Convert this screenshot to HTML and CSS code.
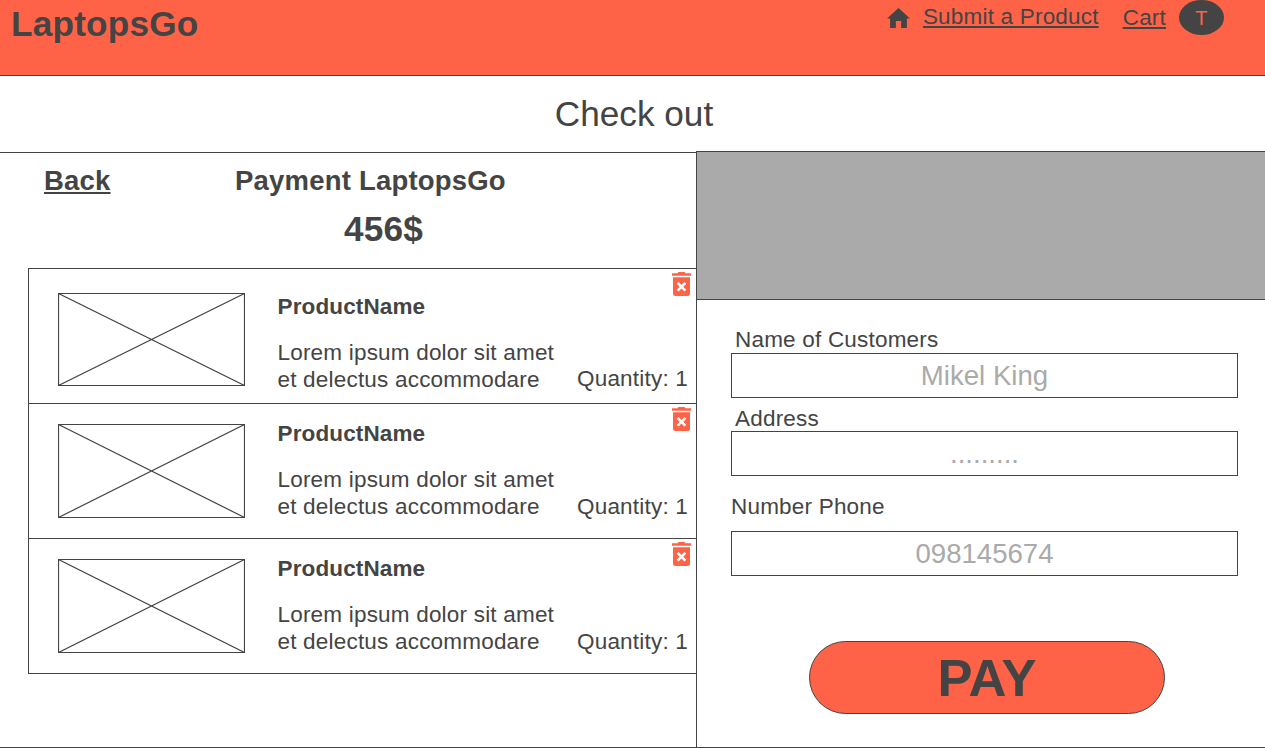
FILE: index.html
```html
<!DOCTYPE html>
<html lang="en">
<head>
<meta charset="utf-8">
<title>LaptopsGo - Check out</title>
<link rel="stylesheet" href="styles.css">
</head>
<body>
<svg class="defs" width="0" height="0">
  <symbol id="trash" viewBox="0 0 19 24">
    <path fill="#ff6347" d="M0 1.200h5.500Q6 0 7 0h5Q13 0 13.500 1.200H19v2.600H0zM1 5.200h17V21.500a2.500 2.500 0 0 1-2.500 2.500h-12A2.500 2.500 0 0 1 1 21.500z"/>
    <path stroke="#fff" stroke-width="2.600" d="M5.600 10.900l7.800 7.800M13.400 10.900l-7.800 7.800"/>
  </symbol>
</svg>
<header class="header">
  <h1 class="logo">LaptopsGo</h1>
  <nav class="nav">
    <svg class="home" viewBox="2 3 20 17" preserveAspectRatio="none"><path fill="#444" d="M9.700 20v-5.900h4.600V20h5v-8H22L12 3 2 12h2.700v8z"/></svg>
    <a class="submit">Submit a Product</a>
    <a class="cart">Cart</a>
    <span class="avatar">T</span>
  </nav>
</header>
<h2 class="title">Check out</h2>
<main class="main">
  <section class="order">
    <div class="order-head">
      <a class="back">Back</a>
      <div class="payee">Payment LaptopsGo</div>
    </div>
    <div class="total">456$</div>
    <div class="list">
      <article class="item first">
        <svg class="thumb" viewBox="0 0 187 93" preserveAspectRatio="none"><path d="M.5.5h186v92H.5zM.5.5l186 92M186.500.5l-186 92"/></svg>
        <div class="info"><h3 class="name">ProductName</h3><p class="desc">Lorem ipsum dolor sit amet<br>et delectus accommodare</p></div>
        <div class="side"><svg class="trash"><use href="#trash"/></svg><span class="qty">Quantity: 1</span></div>
      </article>
      <article class="item">
        <svg class="thumb" viewBox="0 0 187 94" preserveAspectRatio="none"><path d="M.5.5h186v93H.5zM.5.5l186 93M186.500.5l-186 93"/></svg>
        <div class="info"><h3 class="name">ProductName</h3><p class="desc">Lorem ipsum dolor sit amet<br>et delectus accommodare</p></div>
        <div class="side"><svg class="trash"><use href="#trash"/></svg><span class="qty">Quantity: 1</span></div>
      </article>
      <article class="item">
        <svg class="thumb" viewBox="0 0 187 94" preserveAspectRatio="none"><path d="M.5.5h186v93H.5zM.5.5l186 93M186.500.5l-186 93"/></svg>
        <div class="info"><h3 class="name">ProductName</h3><p class="desc">Lorem ipsum dolor sit amet<br>et delectus accommodare</p></div>
        <div class="side"><svg class="trash"><use href="#trash"/></svg><span class="qty">Quantity: 1</span></div>
      </article>
    </div>
  </section>
  <section class="customer">
    <div class="banner"></div>
    <form class="form">
      <div class="label">Name of Customers</div>
      <div class="field">Mikel King</div>
      <div class="label address">Address</div>
      <div class="field">.........</div>
      <div class="label phone">Number Phone</div>
      <div class="field">098145674</div>
      <button class="pay" type="button">PAY</button>
    </form>
  </section>
</main>
</body>
</html>
```
FILE: styles.css
```css
* { box-sizing: border-box; }
body {
  margin: 0;
  height: 748px;
  display: flex;
  flex-direction: column;
  overflow: hidden;
  background: #fff;
  color: #444;
  font: 22.500px/26px "Liberation Sans", Arial, sans-serif;
  letter-spacing: .2px;
}
h1, h2, h3, p { margin: 0; }
svg { display: block; flex: none; }
.defs { position: absolute; }

.header {
  height: 76px;
  display: flex;
  justify-content: space-between;
  align-items: flex-start;
  background: #ff6347;
  border-bottom: 1px solid #444;
  padding: 0 41px 0 11px;
}
.logo { font-size: 35.200px; line-height: 40px; margin-top: 4px; }
.nav { display: flex; align-items: flex-start; }
.home { width: 23px; height: 20px; margin: 8px 13px 0 0; }
.submit, .cart, .back { text-decoration: underline; }
.submit { margin: 4px 24px 0 0; }
.cart { margin: 5px 13px 0 0; }
.avatar {
  width: 45px;
  height: 35px;
  border-radius: 50%;
  background: #444;
  color: #ff6347;
  font-size: 20px;
  line-height: 36px;
  text-align: center;
}

.title {
  height: 77px;
  padding: 18px 0 0 3px;
  border-bottom: 1px solid #444;
  font-size: 35.200px;
  line-height: 40px;
  font-weight: 400;
  letter-spacing: 0;
  text-align: center;
}

.main { flex: 1; display: flex; border-bottom: 1px solid #444; }
.order { width: 696px; display: flex; flex-direction: column; }
.order-head {
  display: flex;
  padding: 12px 0 0 44px;
  font-size: 27.500px;
  line-height: 32px;
  font-weight: 700;
  letter-spacing: .2px;
}
.payee { margin-left: 124.500px; }
.total {
  margin-top: 12px;
  padding-left: 344px;
  font-size: 35.200px;
  line-height: 40px;
  font-weight: 700;
}
.list {
  margin: 19px 0 0 28px;
  border: 1px solid #444;
  border-width: 1px 0 0 1px;
}
.item {
  height: 135px;
  display: flex;
  border-bottom: 1px solid #444;
  padding-left: 29px;
}
.thumb { width: 187px; height: 94px; margin-top: 20px; fill: none; stroke: #444; stroke-width: 1.200; }
.info { margin-left: 32.500px; padding-top: 16px; white-space: nowrap; }
.name { font-size: 22.500px; line-height: 27px; letter-spacing: .13px; }
.desc { line-height: 27px; margin-top: 19px; }
.side {
  flex: 1;
  display: flex;
  flex-direction: column;
  align-items: flex-end;
  padding: 3px 5px 0 0;
}
.trash { width: 19px; height: 24px; }
.qty { margin: 63px 3px 0 0; white-space: nowrap; }
.first .thumb { height: 93px; margin-top: 24px; }
.first .info { padding-top: 24px; }
.first .name { line-height: 27px; }
.first .qty { margin-top: 70px; }

.customer {
  flex: 1;
  margin-top: -2px;
  border-left: 1px solid #444;
}
.banner {
  height: 149px;
  background: #aaa;
  border: 1px solid #444;
  border-width: 1px 0;
}
.form { display: flex; flex-direction: column; padding: 27px 27px 0 34px; }
.label { padding-left: 4px; height: 26px; }
.field {
  height: 45px;
  border: 1px solid #444;
  color: #aaa;
  font-size: 27.600px;
  line-height: 43px;
  letter-spacing: 0;
  text-align: center;
}
.address { margin-top: 8px; height: 25px; }
.phone { padding-left: 0; margin-top: 18px; height: 37px; }
.pay {
  width: 356px;
  height: 73px;
  margin: 65px 0 0 78px;
  padding: 0;
  border: 1px solid #444;
  border-radius: 37px;
  background: #ff6347;
  color: #444;
  font: 700 52.500px/71px "Liberation Sans", Arial, sans-serif;
}
```
